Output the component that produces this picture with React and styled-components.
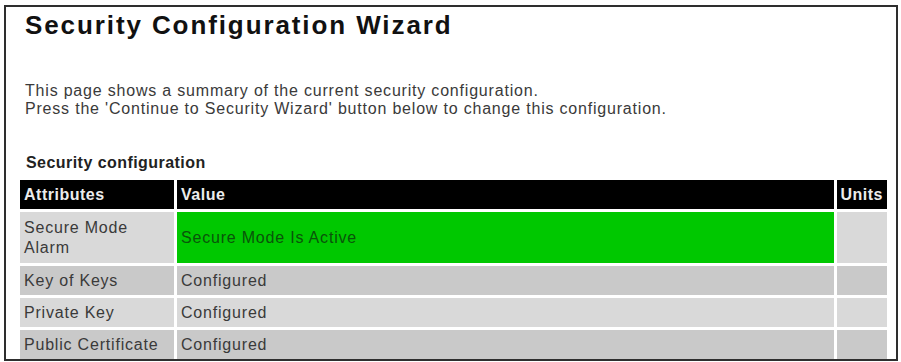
import React from 'react';
import styled, { createGlobalStyle } from 'styled-components';

const ROWS = [
  { name: ['Secure Mode', 'Alarm'], value: 'Secure Mode Is Active', status: 'ok', tall: true },
  { name: ['Key of Keys'], value: 'Configured' },
  { name: ['Private Key'], value: 'Configured' },
  { name: ['Public Certificate'], value: 'Configured' },
];

const GlobalStyle = createGlobalStyle`
  html, body {
    margin: 0;
    padding: 0;
    background: #fff;
  }
  body {
    font-family: 'Liberation Sans', Arial, sans-serif;
    color: #333;
  }
`;

const Frame = styled.div`
  box-sizing: border-box;
  margin: 5px 3px 0 4px;
  height: 356px;
  border: 2px solid #2e2e2e;
  overflow: hidden;
  padding: 4px 8px 0 11px;
`;

const Title = styled.h1`
  margin: 0 0 0 8px;
  font-size: 26px;
  line-height: 28px;
  letter-spacing: 1.9px;
  font-weight: bold;
  color: #111;
  white-space: nowrap;
`;

const Intro = styled.p`
  margin: 43px 0 0 8px;
  font-size: 16px;
  line-height: 18px;
  letter-spacing: 0.8px;
  color: #3a3a3a;
  white-space: nowrap;
`;

const SectionTitle = styled.h2`
  margin: 36px 0 0 9px;
  font-size: 16px;
  line-height: 18px;
  letter-spacing: 0.45px;
  font-weight: bold;
  color: #222;
`;

const Table = styled.table`
  margin-top: 5px;
  width: 873px;
  border-collapse: separate;
  border-spacing: 3px;
  font-size: 16px;
`;

const HeadCell = styled.th`
  height: 29px;
  padding: 0 4px;
  background: #000;
  color: #ececec;
  text-align: left;
  font-weight: bold;
  letter-spacing: 0.5px;
  width: ${(p) => p.$w || 'auto'};
`;

const Row = styled.tr`
  height: ${(p) => (p.$tall ? '51px' : '29px')};
  background: ${(p) => (p.$odd ? '#c9c9c9' : '#d9d9d9')};
`;

const Cell = styled.td`
  padding: 0 4px;
  line-height: 20px;
  letter-spacing: 0.8px;
  color: #3a3a3a;
  vertical-align: middle;
  white-space: nowrap;
`;

const ValueCell = styled(Cell)`
  background: ${(p) => (p.$status === 'ok' ? '#00c800' : 'transparent')};
  color: ${(p) => (p.$status === 'ok' ? '#0a540a' : '#3a3a3a')};
`;

const App = () => (
  <>
    <GlobalStyle />
    <Frame>
      <Title>Security Configuration Wizard</Title>
      <Intro>
        This page shows a summary of the current security configuration.
        <br />
        Press the 'Continue to Security Wizard' button below to change this configuration.
      </Intro>
      <SectionTitle>Security configuration</SectionTitle>
      <Table>
        <thead>
          <tr>
            <HeadCell $w="146px">Attributes</HeadCell>
            <HeadCell>Value</HeadCell>
            <HeadCell $w="41px">Units</HeadCell>
          </tr>
        </thead>
        <tbody>
          {ROWS.map((row, i) => (
            <Row key={row.name.join(' ')} $tall={row.tall} $odd={i % 2 === 1}>
              <Cell>
                {row.name.map((line, j) => (
                  <React.Fragment key={line}>
                    {j > 0 && <br />}
                    {line}
                  </React.Fragment>
                ))}
              </Cell>
              <ValueCell $status={row.status}>{row.value}</ValueCell>
              <Cell />
            </Row>
          ))}
        </tbody>
      </Table>
    </Frame>
  </>
);

export default App;
